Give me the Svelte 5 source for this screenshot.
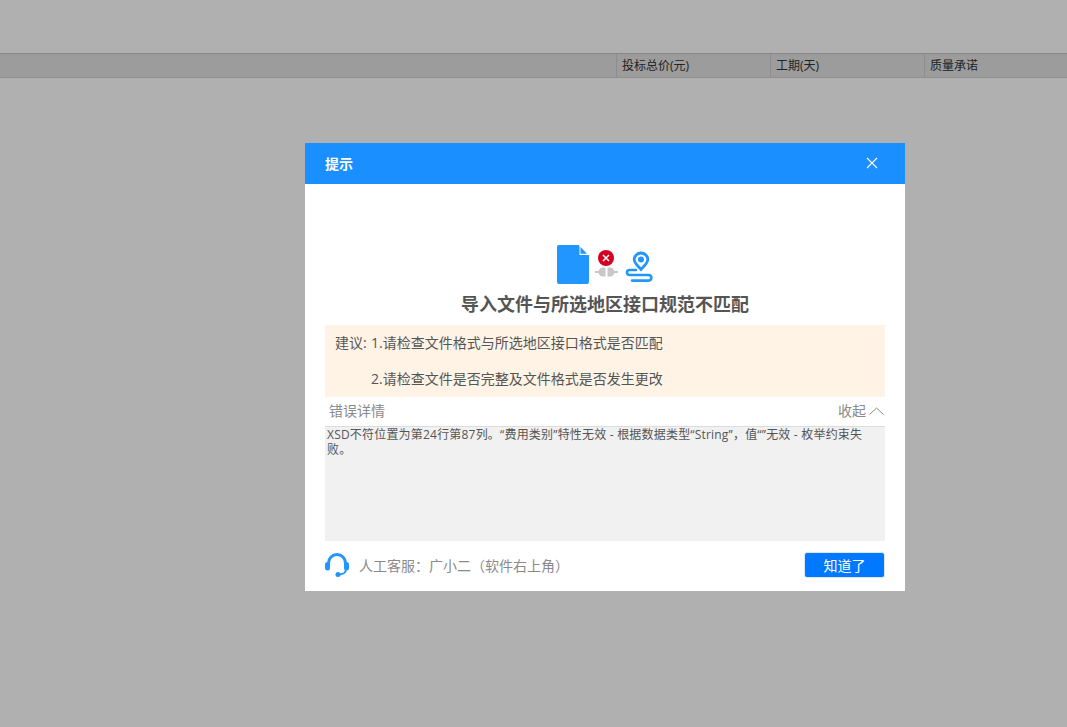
<script>
  const columns = [
    { label: '投标总价(元)', width: 154 },
    { label: '工期(天)', width: 154 },
    { label: '质量承诺', width: 143 }
  ];
</script>

<div class="page">
  <div class="toolbar"></div>
  <div class="thead">
    <div class="spacer"></div>
    {#each columns as c}
      <div class="th" style="width:{c.width}px">{c.label}</div>
    {/each}
  </div>

  <div class="mask"></div>

  <div class="dialog">
    <header class="head">
      <span class="head-title">提示</span>
      <svg class="close" width="12" height="12" viewBox="0 0 12 12" aria-hidden="true">
        <path d="M1 1l10 10M11 1L1 11" stroke="#fff" stroke-width="1.2" fill="none" />
      </svg>
    </header>

    <div class="body">
      <svg class="illus" width="98" height="42" viewBox="0 0 98 42" aria-hidden="true">
        <path d="M3 1h19.500L33 11.500V38a2 2 0 0 1-2 2H3a2 2 0 0 1-2-2V3a2 2 0 0 1 2-2z" fill="#2196fe" />
        <path d="M23.500 1.500L33 11h-9.500z" fill="#fff" />
        <path d="M24.500 3L31 9.800h-6.500z" fill="#2196fe" />
        <circle cx="50" cy="14" r="8" fill="#d3001f" />
        <path d="M47 11l6 6M53 11l-6 6" stroke="#fff" stroke-width="1.5" />
        <rect x="39" y="27" width="6" height="2" fill="#c8c8c8" />
        <path d="M49.500 23.500v9h-2.500a4.500 4.500 0 0 1 0-9z" fill="#c8c8c8" />
        <rect x="56" y="27" width="6" height="2" fill="#c8c8c8" />
        <path d="M51.500 23.500v9h2.500a4.500 4.500 0 0 0 0-9z" fill="#c8c8c8" />
        <path d="M85 9c-3.800 0-6.800 2.900-6.800 6.600 0 3.500 3.700 6.500 6.800 9.900 3.100-3.400 6.800-6.400 6.800-9.900C91.800 11.900 88.800 9 85 9z" fill="none" stroke="#2196fe" stroke-width="2.800" />
        <circle cx="85" cy="15.500" r="3" fill="#2196fe" />
        <path d="M80 26H73.500a2.500 2.500 0 0 0 0 5H92.500a2.800 2.800 0 0 1 0 5.600H76" fill="none" stroke="#2196fe" stroke-width="2.600" stroke-linecap="round" />
      </svg>

      <h2 class="title">导入文件与所选地区接口规范不匹配</h2>

      <div class="advice">
        <span class="advice-label">建议:</span>
        <div class="advice-lines">
          <p>1.请检查文件格式与所选地区接口格式是否匹配</p>
          <p>2.请检查文件是否完整及文件格式是否发生更改</p>
        </div>
      </div>

      <div class="detail-bar">
        <span>错误详情</span>
        <span class="toggle">
          收起
          <svg width="15" height="8" viewBox="0 0 15 8" aria-hidden="true">
            <path d="M0.500 7.500L7.500 1l7 6.500" fill="none" stroke="#8a8a8a" stroke-width="1" />
          </svg>
        </span>
      </div>

      <div class="detail-text">XSD不符位置为第24行第87列。“费用类别”特性无效 - 根据数据类型“String”，值“”无效 - 枚举约束失败。</div>

      <footer class="foot">
        <div class="service">
          <svg width="24" height="24" viewBox="0 0 24 24" aria-hidden="true">
            <path d="M3.500 12V10a8.500 8.500 0 0 1 17 0V12" fill="none" stroke="#2196fe" stroke-width="3" />
            <rect x="0" y="9" width="5" height="8.500" rx="2.500" fill="#2196fe" />
            <rect x="19" y="9" width="5" height="8.500" rx="2.500" fill="#2196fe" />
            <path d="M21 16c0 3.500-3 5.500-7 5.500" fill="none" stroke="#2196fe" stroke-width="2" />
            <circle cx="13" cy="21.500" r="2.500" fill="#2196fe" />
          </svg>
          <span>人工客服：广小二（软件右上角）</span>
        </div>
        <button class="ok" type="button">知道了</button>
      </footer>
    </div>
  </div>
</div>

<style>
  :global(body) {
    margin: 0;
    background: #fff;
  }

  .page {
    position: relative;
    height: 727px;
    overflow: hidden;
    background: #fff;
    font-family: "Open Sans", "Noto Sans CJK SC", sans-serif;
  }

  .toolbar {
    height: 53px;
  }

  .thead {
    display: flex;
    height: 23px;
    background: #e2e2e2;
    border-top: 1px solid #c6c6c6;
    border-bottom: 1px solid #cfcfcf;
  }

  .spacer {
    flex: 0 0 616px;
  }

  .th {
    box-sizing: border-box;
    padding-left: 5px;
    border-left: 1px solid #cccccc;
    font-size: 12px;
    line-height: 24px;
    color: #333;
  }

  .mask {
    position: absolute;
    inset: 0;
    background: rgba(0, 0, 0, 0.31);
  }

  .dialog {
    position: absolute;
    left: 305px;
    top: 143px;
    width: 600px;
    height: 448px;
    background: #fff;
    display: flex;
    flex-direction: column;
  }

  .head {
    flex: 0 0 41px;
    box-sizing: border-box;
    background: #1a8fff;
    display: flex;
    align-items: center;
    justify-content: space-between;
    padding: 0 27px 1px 20px;
    color: #fff;
  }

  .head-title {
    font-size: 14px;
    font-weight: 700;
  }

  .body {
    flex: 1;
    display: flex;
    flex-direction: column;
    padding: 0 20px;
    min-height: 0;
  }

  .illus {
    display: block;
    margin: 60px auto 0;
  }

  .title {
    margin: 6px 0 0;
    height: 33px;
    text-align: center;
    font-size: 18px;
    line-height: 24px;
    font-weight: 700;
    color: #555;
  }

  .advice {
    display: flex;
    height: 72px;
    padding-left: 10px;
    background: #fff3e5;
    font-size: 14px;
    line-height: 36px;
    color: #555;
  }

  .advice-label {
    width: 36px;
  }

  .advice-lines p {
    margin: 0;
  }

  .detail-bar {
    display: flex;
    justify-content: space-between;
    align-items: center;
    height: 29px;
    box-sizing: content-box;
    padding: 0 1px 0 4px;
    font-size: 14px;
    line-height: 27px;
    color: #8a8a8a;
    border-bottom: 1px solid #dcdcdc;
  }

  .detail-bar > span {
    position: relative;
    top: -1px;
  }

  .toggle {
    display: flex;
    align-items: center;
    gap: 3px;
  }

  .detail-text {
    height: 114px;
    box-sizing: border-box;
    padding: 0 20px 0 2px;
    background: #f1f1f1;
    font-size: 12px;
    line-height: 15px;
    letter-spacing: 0.2px;
    color: #555;
  }

  .foot {
    flex: 1;
    display: flex;
    align-items: center;
    justify-content: space-between;
    padding-bottom: 2px;
  }

  .service {
    display: flex;
    align-items: center;
    gap: 10px;
    font-size: 14px;
    color: #8a8a8a;
  }

  .ok {
    width: 81px;
    height: 26px;
    border: 1px solid #dbe9f7;
    border-radius: 3px;
    background: #0079fe;
    color: #fff;
    font: inherit;
    font-size: 14px;
    padding: 0;
  }
</style>
